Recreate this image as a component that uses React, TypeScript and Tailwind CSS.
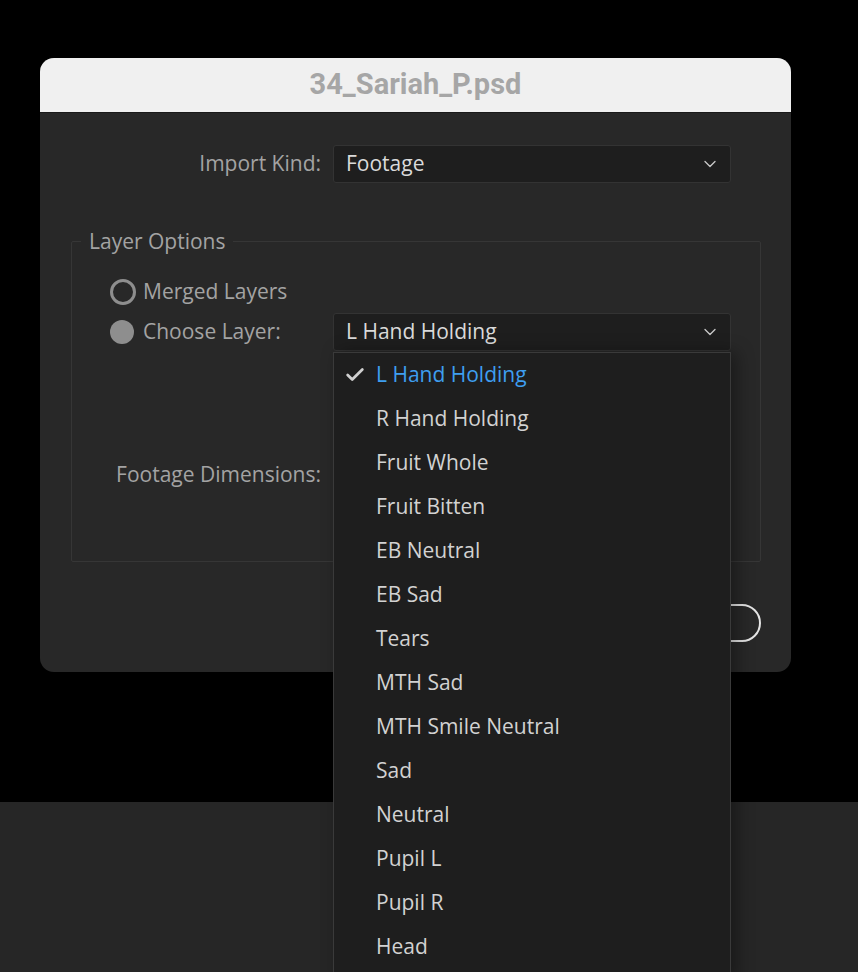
import { Check, ChevronDown } from 'lucide-react';

const layers = [
	'L Hand Holding',
	'R Hand Holding',
	'Fruit Whole',
	'Fruit Bitten',
	'EB Neutral',
	'EB Sad',
	'Tears',
	'MTH Sad',
	'MTH Smile Neutral',
	'Sad',
	'Neutral',
	'Pupil L',
	'Pupil R',
	'Head'
];

function SelectBox({ value }: { value: string }) {
	return (
		<div className="w-[398px] h-[38px] bg-[#1e1e1e] border border-[#333333] rounded-[3px] flex items-center justify-between pl-[12px] pr-[10px]">
			<span className="text-[#dadada]">{value}</span>
			<ChevronDown size={20} strokeWidth={1.6} className="text-[#c8c8c8]" />
		</div>
	);
}

function Radio({ checked }: { checked: boolean }) {
	return checked ? (
		<span className="w-[24px] h-[24px] rounded-full bg-[#8e8e8e]" />
	) : (
		<span className="w-[26px] h-[26px] rounded-full border-[3px] border-[#8e8e8e]" />
	);
}

export default function App() {
	const selected = layers[0];

	return (
		<div
			className="w-[858px] h-[972px] bg-black flex flex-col overflow-hidden text-[21px]"
			style={{ fontFamily: '"Open Sans", "Noto Sans", sans-serif' }}
		>
			<div className="h-[802px] shrink-0 pt-[58px] pl-[40px]">
				<div className="w-[751px] h-[614px] rounded-[14px] bg-[#282828] flex flex-col">
					<div
						className="h-[55px] bg-[#f0f0f0] rounded-t-[14px] border-b border-[#1a1a1a] flex items-center justify-center text-[29px] font-bold text-[#a6a6a6]"
						style={{ fontFamily: 'Roboto, "Liberation Sans", sans-serif' }}
					>
						34_Sariah_P.psd
					</div>

					<div className="flex items-center mt-[32px]">
						<div className="w-[293px] pr-[12px] text-right text-[#a3a3a3]">
							Import Kind:
						</div>
						<SelectBox value="Footage" />
					</div>

					<fieldset className="mt-[46px] ml-[31px] mr-[30px] h-[333px] border border-[#363636] rounded-[2px]">
						<legend className="ml-[9px] px-[8px] text-[#a3a3a3] leading-[24px]">
							Layer Options
						</legend>

						<div className="pl-[38px] pt-[19px]">
							<div className="h-[40px] flex items-center gap-[7px] text-[#a3a3a3]">
								<Radio checked={false} />
								<span>Merged Layers</span>
							</div>
							<div className="h-[40px] flex items-center">
								<div className="w-[223px] flex items-center gap-[9px] text-[#a3a3a3]">
									<Radio checked />
									<span>Choose Layer:</span>
								</div>
								<div className="relative">
									<SelectBox value={selected} />
									<div className="absolute left-0 top-[39px] w-[398px] h-[630px] bg-[#1e1e1e] border border-[#3a3a3a] shadow-[6px_0_16px_rgba(0,0,0,0.35)] z-10">
										{layers.map((layer) => (
											<div key={layer} className="h-[44px] flex items-center">
												<span className="w-[42px] flex justify-center">
													{layer === selected && (
														<Check size={22} strokeWidth={3} className="text-[#d0d0d0]" />
													)}
												</span>
												<span
													className={
														layer === selected ? 'text-[#3e9ef0]' : 'text-[#d2d2d2]'
													}
												>
													{layer}
												</span>
											</div>
										))}
									</div>
								</div>
							</div>
						</div>

						<div className="flex mt-[110px]">
							<div className="w-[249px] text-right text-[#a3a3a3] leading-[24px]">
								Footage Dimensions:
							</div>
						</div>
					</fieldset>

					<div className="flex justify-end mr-[30px] mt-[42px]">
						<div className="w-[130px] h-[38px] rounded-full border-2 border-[#e4e4e4] flex items-center justify-center text-[#e4e4e4]">
							OK
						</div>
					</div>
				</div>
			</div>
			<div className="flex-1 bg-[#262626]" />
		</div>
	);
}
